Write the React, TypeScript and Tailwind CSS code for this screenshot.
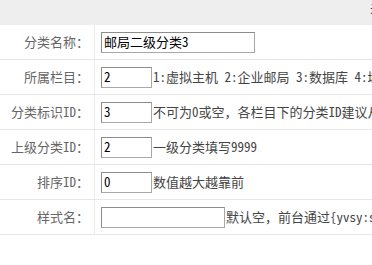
import React from "react";

const font = { fontFamily: '"Noto Sans Mono CJK SC", "Noto Sans CJK SC", "Noto Sans", sans-serif' };

type Row = { label: string; value?: string; w: string; hint: string };

const rows: Row[] = [
  { label: "分类名称：", value: "邮局二级分类3", w: "w-[154px]", hint: "" },
  { label: "所属栏目：", value: "2", w: "w-[51px]", hint: "1:虚拟主机 2:企业邮局 3:数据库 4:域名" },
  { label: "分类标识ID：", value: "3", w: "w-[51px]", hint: "不可为0或空，各栏目下的分类ID建议从1开始" },
  { label: "上级分类ID：", value: "2", w: "w-[51px]", hint: "一级分类填写9999" },
  { label: "排序ID：", value: "0", w: "w-[51px]", hint: "数值越大越靠前" },
  { label: "样式名：", value: "", w: "w-[124px]", hint: "默认空，前台通过{yvsy:style}调用" },
];

export default function App() {
  return (
    <div className="relative w-[372px] h-[265px] overflow-hidden bg-white" style={font}>
      <div className="relative h-[25px] bg-[#eeeeee] overflow-hidden">
        <span className="absolute left-[370px] top-[-3px] text-[13px] text-[#333]">关</span>
      </div>
      <div className="flex flex-col">
        {rows.map((r, i) => (
          <div key={i} className="flex h-[35px] border-b border-[#e6e6e6]">
            <div className="w-[95px] shrink-0 border-r border-[#ececec] flex items-center justify-end pr-[5px] text-[13px] text-[#666] whitespace-nowrap">
              {r.label}
            </div>
            <div className="flex items-center pl-[6px] whitespace-nowrap min-w-0">
              <div
                className={`${r.w} h-[21px] shrink-0 border border-[#a8a8a8] border-t-[#8c8c8c] border-l-[#8c8c8c] bg-white flex items-center pl-[2px] text-[13px] text-black`}
              >
                {r.value}
              </div>
              {r.hint && (
                <span className="pl-[1px] text-[13px] text-[#444] whitespace-nowrap">{r.hint}</span>
              )}
            </div>
          </div>
        ))}
      </div>
    </div>
  );
}
